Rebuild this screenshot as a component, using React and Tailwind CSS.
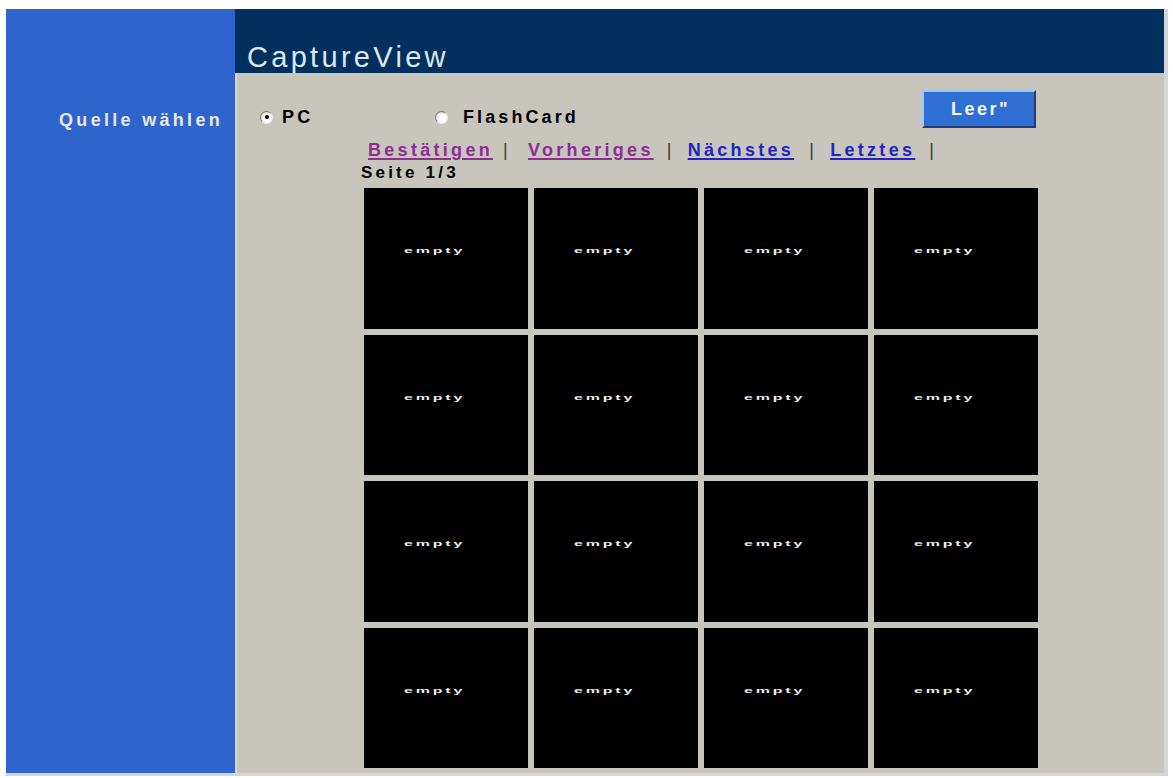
import React from "react";

const cells = Array.from({ length: 16 }, (_, i) => i);

function Radio({ checked }) {
  return (
    <span className="relative inline-flex h-[13px] w-[13px] items-center justify-center rounded-full border border-t-[#7e7d78] border-l-[#7e7d78] border-r-[#eeeeea] border-b-[#eeeeea] bg-[radial-gradient(circle_at_60%_60%,#ffffff_35%,#c4c2bc_100%)]">
      {checked && <span className="h-[4px] w-[4px] rounded-full bg-black" />}
    </span>
  );
}

export default function App() {
  return (
    <div className="h-[778px] w-[1173px] bg-white pl-[6px] pt-[9px] font-['Liberation_Sans',Arial,sans-serif]">
      <div className="flex h-[767px] w-[1162px] border-b-[3px] border-r-[4px] border-[#d3d5da]">
        {/* Sidebar */}
        <div className="w-[229px] shrink-0 bg-[#2e64cc] pr-[12px] pt-[100px] text-right">
          <div className="text-[18px] font-bold leading-[22px] tracking-[3.3px] text-[#e4eaf4]">
            Quelle wählen
          </div>
        </div>

        {/* Main */}
        <div className="flex flex-1 flex-col">
          <div className="h-[64px] shrink-0 bg-[#01305e] pl-[12px] pt-[34px]">
            <div className="text-[29px] leading-[29px] tracking-[3.3px] text-[#dfe8f1]">
              CaptureView
            </div>
          </div>

          <div className="flex flex-1 flex-col border-l-2 border-[#d9d7d1] bg-[#c8c5bd]">
            {/* Row 1: radios + button */}
            <div className="mt-[17px] flex h-[38px] items-end">
              <div className="ml-[23px] flex h-[22px] w-[175px] items-center">
                <Radio checked />
                <span className="ml-[9px] text-[18px] font-bold leading-[22px] tracking-[3.3px] text-black">
                  PC
                </span>
              </div>
              <div className="flex h-[22px] items-center">
                <Radio />
                <span className="ml-[15px] text-[18px] font-bold leading-[22px] tracking-[3.1px] text-black">
                  FlashCard
                </span>
              </div>
              <button className="ml-auto mr-[128px] flex h-[38px] w-[114px] items-center justify-center self-start border-2 border-b-[#1e3c7a] border-l-[#a9c3ee] border-r-[#1e3c7a] border-t-[#a9c3ee] bg-[#2f6fd4] pl-[3px] text-[18px] font-bold leading-none tracking-[2.5px] text-[#f2f6fc]">
                Leer"
              </button>
            </div>

            {/* Links row */}
            <div className="ml-[131px] mt-[11px] flex h-[22px] items-center text-[18px] font-bold leading-[22px] tracking-[3.3px]">
              <a className="text-[#8e2d92] underline decoration-[1.5px] underline-offset-[2px]">Bestätigen</a>
              <span className="ml-[10px] mr-[17px] font-normal text-[#3a3a3a]">|</span>
              <a className="text-[#8e2d92] underline decoration-[1.5px] underline-offset-[2px]">Vorheriges</a>
              <span className="ml-[13px] mr-[13px] font-normal text-[#3a3a3a]">|</span>
              <a className="text-[#2424c4] underline decoration-[1.5px] underline-offset-[2px]">Nächstes</a>
              <span className="ml-[15px] mr-[13px] font-normal text-[#3a3a3a]">|</span>
              <a className="text-[#2424c4] underline decoration-[1.5px] underline-offset-[2px]">Letztes</a>
              <span className="ml-[14px] font-normal text-[#3a3a3a]">|</span>
            </div>

            {/* Page indicator */}
            <div className="ml-[124px] mt-[3px] text-[17px] font-bold leading-[18px] tracking-[3.2px] text-black">
              Seite 1/3
            </div>

            {/* Grid */}
            <div className="ml-[127px] mt-[6px] grid grid-cols-[repeat(4,164px)] grid-rows-[repeat(4,140.5px)] gap-[6px]">
              {cells.map((i) => (
                <div key={i} className="flex items-start bg-black pl-[40px] pt-[56px]">
                  <span className="inline-block origin-center scale-y-[0.4] text-[16px] font-black leading-[14px] tracking-[2.8px] text-[#ececec]">
                    empty
                  </span>
                </div>
              ))}
            </div>
          </div>
        </div>
      </div>
    </div>
  );
}
